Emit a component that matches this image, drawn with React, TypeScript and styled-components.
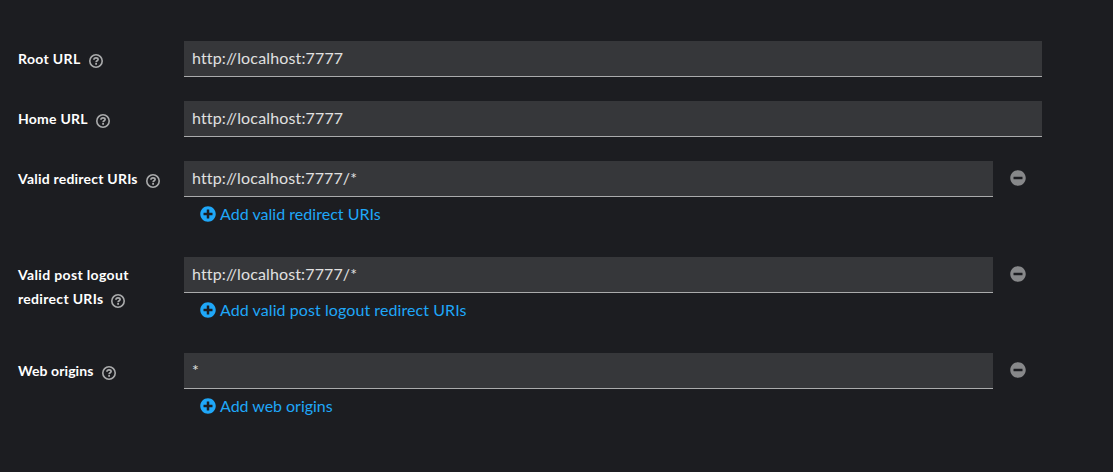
import React from "react";
import styled, { createGlobalStyle } from "styled-components";
import { FaPlusCircle, FaMinusCircle } from "react-icons/fa";

const GlobalStyle = createGlobalStyle`
  *, *::before, *::after { box-sizing: border-box; }
  body {
    margin: 0;
    background: #1c1d21;
    font-family: Lato, "Liberation Sans", sans-serif;
    font-size: 16px;
    font-variant-ligatures: none;
  }
`;

const Form = styled.form`
  display: grid;
  gap: 24px;
  min-height: 472px;
  align-content: start;
  padding: 41px 71px 0 18px;
`;

const Group = styled.div`
  display: grid;
  grid-template-columns: 166px 1fr;
  align-items: start;
`;

const Label = styled.label`
  padding-top: 6px;
  font-size: 14px;
  font-weight: 700;
  line-height: 24px;
  color: #ffffff;
`;

const LabelLine = styled.span`
  display: flex;
  gap: 8px;
  height: 24px;
`;

const Track = styled.span<{ $track: number }>`
  letter-spacing: ${(p) => p.$track}px;
  white-space: pre;
`;

const HelpIcon = styled.svg`
  flex: none;
  width: 14px;
  height: 14px;
  margin-top: 7px;
`;

const FieldRow = styled.div`
  display: flex;
`;

const Value = styled.div`
  flex: 1;
  height: 36px;
  padding: 0 8px;
  line-height: 34px;
  color: #e0e0e0;
  background: #36373a;
  border-bottom: 1px solid #aaabac;
`;

const RemoveButton = styled.button`
  display: flex;
  width: 49px;
  height: 36px;
  padding: 9px 16px 0 17px;
  border: 0;
  background: none;
  color: #87888a;
`;

const AddButton = styled.button`
  display: flex;
  align-items: flex-start;
  gap: 4px;
  height: 36px;
  padding: 5px 16px 0;
  border: 0;
  background: none;
  font: inherit;
  line-height: 24px;
  color: #1fa7f8;

  svg {
    margin-top: 4px;
  }
`;

type Line = [string, number];
type Field = { label: Line[]; value: Line; add?: Line };

const fields: Field[] = [
  { label: [["Root URL", 0.35]], value: ["http://localhost:7777", 0.15] },
  { label: [["Home URL", 0.25]], value: ["http://localhost:7777", 0.15] },
  {
    label: [["Valid redirect URIs", 0.22]],
    value: ["http://localhost:7777/*", 0.13],
    add: ["Add valid redirect URIs", 0.03],
  },
  {
    label: [["Valid post logout", 0.35], ["redirect URIs", 0.31]],
    value: ["http://localhost:7777/*", 0.13],
    add: ["Add valid post logout redirect URIs", 0.08],
  },
  { label: [["Web origins", 0.09]], value: ["*", 0], add: ["Add web origins", -0.03] },
];

const Help = () => (
  <HelpIcon viewBox="0 0 14 14" fill="none" stroke="#aaabac">
    <circle cx="7" cy="7" r="6.2" strokeWidth="1.6" />
    <path d="M4.900 5.700C5 4.500 5.800 3.900 7 3.900c1.200 0 2.100.7 2.100 1.600C9.100 6.800 7.100 6.700 7.100 8.200" strokeWidth="1.700" />
    <path d="M7.100 9.100v1.600" strokeWidth="1.800" />
  </HelpIcon>
);

export default function App() {
  return (
    <>
      <GlobalStyle />
      <Form>
        {fields.map((f, i) => (
          <Group key={i}>
            <Label>
              {f.label.map(([text, track], n) => (
                <LabelLine key={text}>
                  <Track $track={track}>{text}</Track>
                  {n === f.label.length - 1 && <Help />}
                </LabelLine>
              ))}
            </Label>
            <div>
              <FieldRow>
                <Value>
                  <Track $track={f.value[1]}>{f.value[0]}</Track>
                </Value>
                {f.add && (
                  <RemoveButton type="button" aria-label="Remove">
                    <FaMinusCircle size={16} />
                  </RemoveButton>
                )}
              </FieldRow>
              {f.add && (
                <AddButton type="button">
                  <FaPlusCircle size={16} />
                  <Track $track={f.add[1]}>{f.add[0]}</Track>
                </AddButton>
              )}
            </div>
          </Group>
        ))}
      </Form>
    </>
  );
}
